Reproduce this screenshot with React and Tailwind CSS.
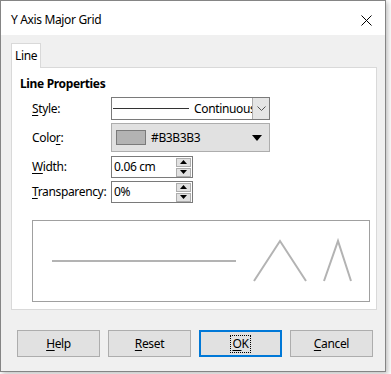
export default function App() {
  const font = { fontFamily: '"Noto Sans", "Open Sans", sans-serif' };
  const Spin = () => (
    <div className="flex flex-col gap-px mr-[1px]">
      <div className="w-[15px] h-[9px] bg-[#e1e1e1] border border-[#adadad] flex items-center justify-center">
        <svg width="7" height="4" viewBox="0 0 7 4"><path d="M3.5 0 L7 4 L0 4 Z" fill="#000" /></svg>
      </div>
      <div className="w-[15px] h-[9px] bg-[#e1e1e1] border border-[#adadad] flex items-center justify-center">
        <svg width="7" height="4" viewBox="0 0 7 4"><path d="M0 0 L7 0 L3.5 4 Z" fill="#000" /></svg>
      </div>
    </div>
  );
  return (
    <div className="w-[391px] h-[374px] bg-[#ffffff] text-[12px] tracking-[-0.35px] text-black" style={font}>
      <div className="w-[386px] h-[372px] border border-[#858585] bg-[#f0f0f0] flex flex-col shadow-[2px_2px_5px_rgba(0,0,0,0.25)]">
        <div className="h-[34px] bg-white flex items-center justify-between pl-[10px] pr-[13px] pt-[4px] shrink-0">
          <span className="leading-[16px]">Y Axis Major Grid</span>
          <svg width="11" height="11" viewBox="0 0 11 11">
            <path d="M0.5 0.5 L10.5 10.5 M10.5 0.5 L0.5 10.5" stroke="#000" strokeWidth="1" />
          </svg>
        </div>
        <div className="flex flex-col px-[10px] pt-[8px]">
          <div className="flex">
            <div className="w-[30px] h-[25px] bg-white border border-b-0 border-[#d9d9d9] relative z-10 -mb-px pl-[3px] flex items-center">
              <span className="leading-[16px]">Line</span>
            </div>
          </div>
          <div className="w-[366px] h-[243px] bg-white border border-[#d9d9d9] flex flex-col">
            <div className="pl-[8px] pt-[8px] font-bold leading-[16px]">Line Properties</div>
            <div className="pl-[20px] mt-[5px] flex flex-col">
              <div className="flex items-center h-[23px]">
                <div className="w-[79px]"><u className="underline-offset-2">S</u>tyle:</div>
                <div className="w-[159px] h-[23px] border border-[#7a7a7a] bg-white flex items-center">
                  <div className="flex-1 flex items-center overflow-hidden pl-[1px] h-full">
                    <div className="w-[76px] h-px bg-[#333] shrink-0" />
                    <span className="ml-[5px] whitespace-nowrap leading-[16px]">Continuous</span>
                  </div>
                  <div className="w-[17px] h-[21px] bg-[#e5e5e5] border-l border-[#adadad] flex items-center justify-center shrink-0">
                    <svg width="9" height="5" viewBox="0 0 9 5"><path d="M0.5 0.5 L4.5 4.5 L8.5 0.5" stroke="#555" fill="none" /></svg>
                  </div>
                </div>
              </div>
              <div className="flex items-center h-[29px] mt-[3px]">
                <div className="w-[79px]">Colo<u className="underline-offset-2">r</u>:</div>
                <div className="w-[159px] h-[29px] border border-[#adadad] bg-[#e1e1e1] flex items-center pl-[4px] pr-[7px]">
                  <div className="w-[30px] h-[15px] bg-[#b3b3b3] border border-[#7a7a7a]" />
                  <span className="ml-[5px] leading-[16px]">#B3B3B3</span>
                  <div className="flex-1" />
                  <svg width="10" height="6" viewBox="0 0 10 6"><path d="M0 0 L10 0 L5 6 Z" fill="#000" /></svg>
                </div>
              </div>
              <div className="flex items-center h-[22px] mt-[4px]">
                <div className="w-[79px]"><u className="underline-offset-2">W</u>idth:</div>
                <div className="w-[82px] h-[22px] border border-[#7a7a7a] bg-white flex items-center pl-[2px]">
                  <span className="flex-1 leading-[16px]">0.06 cm</span>
                  <Spin />
                </div>
              </div>
              <div className="flex items-center h-[22px] mt-[3px]">
                <div className="w-[79px] whitespace-nowrap"><u className="underline-offset-2">T</u>ransparency:</div>
                <div className="w-[82px] h-[22px] border border-[#7a7a7a] bg-white flex items-center pl-[2px]">
                  <span className="flex-1 leading-[16px]">0%</span>
                  <Spin />
                </div>
              </div>
              <div className="mt-[17px] w-[338px] h-[82px] border border-[#a0a0a0] bg-white">
                <svg width="336" height="80" viewBox="0 0 336 80">
                  <path d="M19 40 L203 40" stroke="#b3b3b3" strokeWidth="2" fill="none" />
                  <path d="M221 60 L247 20 L273 60" stroke="#b3b3b3" strokeWidth="2" fill="none" />
                  <path d="M291 60 L305 20 L318 60" stroke="#b3b3b3" strokeWidth="2" fill="none" />
                </svg>
              </div>
            </div>
          </div>
          <div className="flex gap-[8px] ml-[6px] mt-[20px]">
            <div className="w-[83px] h-[27px] bg-[#e1e1e1] border border-[#adadad] flex items-center justify-center leading-[16px]"><span><u className="underline-offset-2">H</u>elp</span></div>
            <div className="w-[83px] h-[27px] bg-[#e1e1e1] border border-[#adadad] flex items-center justify-center leading-[16px]"><span><u className="underline-offset-2">R</u>eset</span></div>
            <div className="w-[83px] h-[27px] bg-[#e1e1e1] border-2 border-[#0078d7] flex items-center justify-center leading-[16px]"><span className="outline-1 outline-dotted outline-black px-px"><u className="underline-offset-2">O</u>K</span></div>
            <div className="w-[83px] h-[27px] bg-[#e1e1e1] border border-[#adadad] flex items-center justify-center leading-[16px]"><span><u className="underline-offset-2">C</u>ancel</span></div>
          </div>
        </div>
      </div>
    </div>
  );
}
